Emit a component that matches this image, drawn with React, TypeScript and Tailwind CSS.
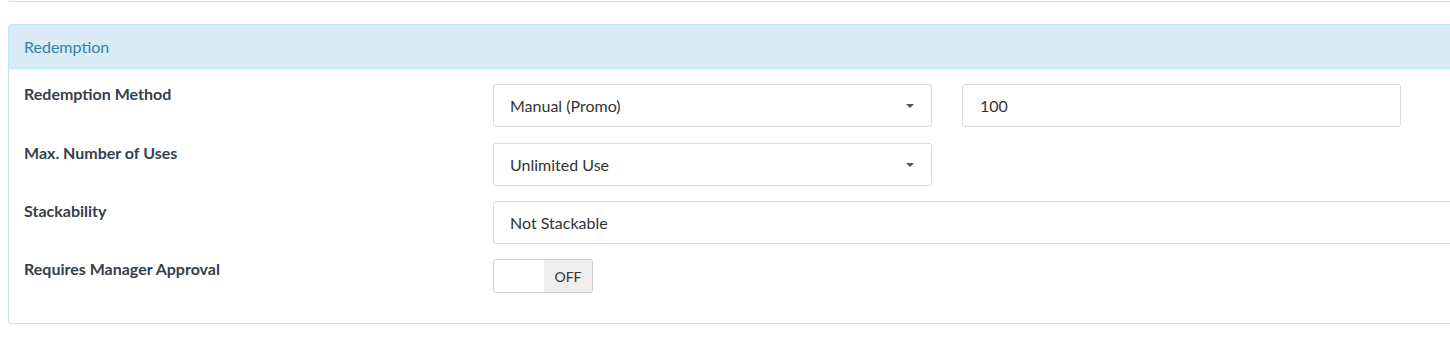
const Caret = () => (
    <span className="block w-0 h-0 border-l-[4px] border-r-[4px] border-t-[4px] border-l-transparent border-r-transparent border-t-[#555]" />
);

const SelectBox = ({ value }: { value: string }) => (
    <div className="flex items-center justify-between w-[439px] h-[43px] px-[16px] border border-[#dcdcdc] rounded-[3px] bg-white text-[16px] text-[#333]">
        <span>{value}</span>
        <span className="flex items-center mr-[1px]"><Caret /></span>
    </div>
);

const Row = ({ label, children, className }: { label: string; children: React.ReactNode; className?: string }) => (
    <div className={"flex " + (className ?? "")}>
        <div className="w-[469px] shrink-0 -mt-[1px] text-[16px] font-bold text-[#36414a] leading-[22px]">{label}</div>
        <div className="flex gap-[30px] flex-1">{children}</div>
    </div>
);

const App = () => {
    return (
        <div className="w-[1450px] h-[339px] overflow-hidden bg-white" style={{ fontFamily: "Lato, 'Noto Sans', sans-serif" }}>
            <div className="w-[1480px]">
                <div className="ml-[8px] h-[2px] border-l border-b border-[#bce8f1] rounded-bl-[3px]" />
                <div className="ml-[8px] mt-[22px] border border-[#bce8f1] rounded-[3px]">
                    <div className="h-[44px] flex items-center px-[15px] bg-[#d9ebf5] border-b border-[#bce8f1] text-[16px] text-[#3a7ea3]">
                        Redemption
                    </div>
                    <div className="flex flex-col gap-[15px] pl-[15px] pr-[16px] pt-[15px] pb-[30px]">
                        <Row label="Redemption Method" className="mb-[1px]">
                            <SelectBox value="Manual (Promo)" />
                            <div className="flex items-center w-[439px] h-[43px] px-[17px] border border-[#dcdcdc] rounded-[3px] text-[16px] text-[#333]">100</div>
                        </Row>
                        <Row label="Max. Number of Uses">
                            <SelectBox value="Unlimited Use" />
                        </Row>
                        <Row label="Stackability">
                            <div className="flex items-center flex-1 h-[43px] px-[16px] border border-[#dcdcdc] rounded-[3px] text-[16px] text-[#333]">Not Stackable</div>
                        </Row>
                        <Row label="Requires Manager Approval">
                            <div className="flex w-[100px] h-[34px] border border-[#cfcfcf] rounded-[3px] overflow-hidden">
                                <div className="w-[50px] bg-white" />
                                <div className="flex-1 flex items-center justify-center bg-[#eeeeee] text-[14px] text-[#333]">OFF</div>
                            </div>
                        </Row>
                    </div>
                </div>
            </div>
        </div>
    );
};

export default App;
